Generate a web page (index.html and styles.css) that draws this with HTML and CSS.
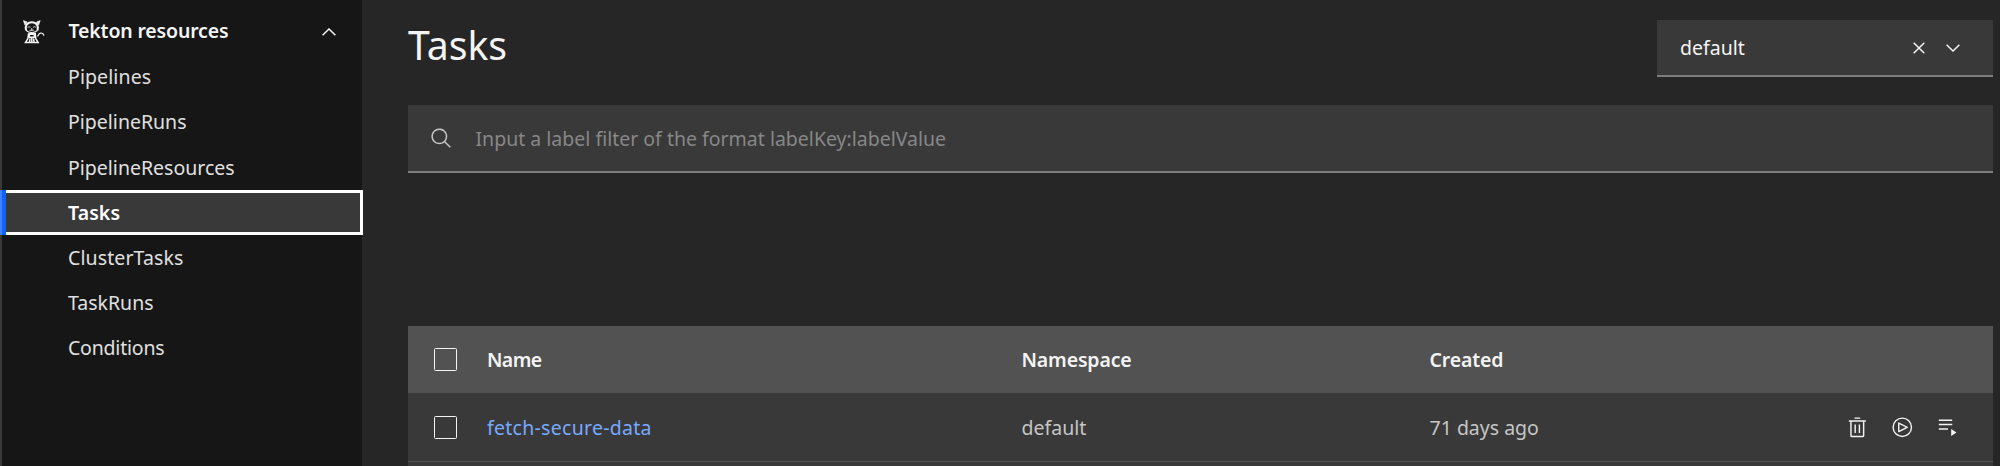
FILE: index.html
```
<!DOCTYPE html>
<html lang="en">
<head>
<meta charset="utf-8">
<title>Tasks</title>
<link rel="stylesheet" href="styles.css">
</head>
<body>
<div class="app">
  <nav class="sidebar">
    <div class="nav-header">
      <svg class="nav-logo" viewBox="0 0 22 24" fill="none" stroke="#f4f4f4">
        <path d="M.4.6 4.2 2 2 5.2zM17.2.6 13.4 2l2.2 3.2z" fill="#f4f4f4" stroke-width=".6"/>
        <path d="M3 10.2C1.600 6 4.300 2.200 8.800 2.200s7.200 3.800 5.800 8" stroke-width="2"/>
        <path d="M2.800 9.500c1.500 2.800 3.700 3 6 3s4.500-.2 6-3" stroke-width="1.200"/>
        <path d="M4.500 7.300q1.700-1.200 3 0M10 7.300q1.400-1.200 3 0M8.800 8v3M6.500 10.200h4.600" stroke-width=".8"/>
        <path d="M5.500 13.500h6.700l.6 5.300M5.500 13.500l-.6 5.300M6.300 14.300h5v3h-5zM5 18.400l-2.500 4h4l.5-3.900M12.600 18.400l2.500 4h-4l-.5-3.900M8.800 17.500v4.800M6.800 22.400h4" stroke-width="1.500"/>
        <path d="M14.200 16.200c1.800-.2 1-3 3.600-3.200 1.800 0 2.800 1 3.100 2.600" stroke-width="1.200"/>
      </svg>
      <span class="nav-title">Tekton resources</span>
      <svg class="nav-chevron" viewBox="0 0 14 8"><path d="M.6 7.300 7 1l6.400 6.300"/></svg>
    </div>
    <ul class="nav-list">
      <li class="nav-item ls-up">Pipelines</li>
      <li class="nav-item">PipelineRuns</li>
      <li class="nav-item">PipelineResources</li>
      <li class="nav-item active ls-up">Tasks</li>
      <li class="nav-item ls-up">ClusterTasks</li>
      <li class="nav-item">TaskRuns</li>
      <li class="nav-item ls-down">Conditions</li>
    </ul>
  </nav>
  <main class="content">
    <header class="page-header">
      <h1 class="page-title">Tasks</h1>
      <div class="dropdown">
        <span class="dropdown-value">default</span>
        <svg class="close-icon" viewBox="0 0 12 12"><path d="m.7.700 10.600 10.600M11.300.700.700 11.300"/></svg>
        <svg class="chevron-icon" viewBox="0 0 14 8"><path d="M.6.700 7 7l6.400-6.300"/></svg>
      </div>
    </header>
    <div class="search">
      <svg class="search-icon" viewBox="0 0 32 32"><path d="M29,27.5859l-7.5521-7.5521a11.0177,11.0177,0,1,0-1.4141,1.4141L27.5859,29ZM4,13a9,9,0,1,1,9,9A9.01,9.01,0,0,1,4,13Z"/></svg>
      <span>Input a label filter of the format labelKey:labelValue</span>
    </div>
    <div class="table">
      <div class="row head">
        <span class="checkbox"></span>
        <span class="ls-head">Name</span>
        <span>Namespace</span>
        <span>Created</span>
      </div>
      <div class="row">
        <span class="checkbox"></span>
        <a class="link">fetch-secure-data</a>
        <span>default</span>
        <span>71 days ago</span>
        <div class="actions">
          <svg viewBox="0 0 32 32"><path d="M12 12h2v12h-2zM18 12h2v12h-2zM4 6v2h2v20a2 2 0 0 0 2 2h16a2 2 0 0 0 2-2V8h2V6zm4 22V8h16v20zM12 2h8v2h-8z"/></svg>
          <svg viewBox="0 0 32 32"><path d="M11,23a1,1,0,0,1-1-1V10a1,1,0,0,1,1.447-.894l12,6a1,1,0,0,1,0,1.788l-12,6A1,1,0,0,1,11,23Zm1-11.382v8.764L20.764,16Z"/><path d="M16,4A12,12,0,1,1,4,16,12,12,0,0,1,16,4m0-2A14,14,0,1,0,30,16,14,14,0,0,0,16,2Z"/></svg>
          <svg viewBox="0 0 32 32"><path d="M4 5h19v2H4zM4 11h19v2H4zM4 17.500h13v2H4zM21.500 18.500v10l7.500-5z"/></svg>
        </div>
      </div>
      <div class="row"></div>
    </div>
  </main>
</div>
</body>
</html>
```
FILE: styles.css
```
* { box-sizing: border-box; }
body {
  margin: 0;
  background: #262626;
  color: #f4f4f4;
  font: 19.5px "Noto Sans", sans-serif;
}
svg { display: block; flex: none; fill: #f4f4f4; }
.app { display: flex; height: 466px; overflow: hidden; }

.sidebar {
  flex: none;
  width: 362px;
  padding-top: 9px;
  background: linear-gradient(to right, #393939 2px, #161616 2px);
}
.nav-header { display: flex; align-items: center; height: 45.2px; padding: 0 26.500px 0 23px; }
.nav-logo { width: 22px; height: 24px; fill: none; }
.nav-title { flex: 1; margin-left: 23.500px; padding-bottom: 2px; font-weight: 600; letter-spacing: -0.16px; }
.nav-chevron { width: 14px; height: 8px; }
.nav-chevron path, .close-icon path, .chevron-icon path { fill: none; stroke: #f4f4f4; stroke-width: 1.500; }
.nav-list { margin: 0; padding: 0; list-style: none; }
.nav-item { height: 45.200px; padding-left: 68px; line-height: 45.200px; color: #e0e0e0; }
.nav-item.active {
  width: 363px;
  background:
    linear-gradient(to right, #4580ff 2px, #0f62fe 2px) 0 0 / 6px 100% no-repeat,
    linear-gradient(#393939, #393939) 6px 3px / 354px calc(100% - 6px) no-repeat,
    #fff;
  color: #fff;
  font-weight: 600;
}
.ls-up { letter-spacing: 0.1px; }
.ls-down { letter-spacing: -0.2px; }
.ls-head { letter-spacing: -0.6px; }

.content { flex: 1; display: flex; flex-direction: column; padding: 20px 7px 0 46px; }
.page-header { flex: none; display: flex; justify-content: space-between; height: 85px; }
.page-title { margin: 0; font-size: 39.200px; font-weight: 400; line-height: 49px; color: #f4f4f4; }
.dropdown {
  display: flex;
  align-items: center;
  width: 336px;
  height: 57px;
  padding: 0 33px 0 23px;
  background: #393939;
  border-bottom: 2px solid #7c7c7c;
}
.dropdown-value { flex: 1; }
.close-icon { width: 12px; height: 12px; margin-right: 21px; }
.chevron-icon { width: 14px; height: 8px; }
.search {
  flex: none;
  display: flex;
  align-items: center;
  gap: 22.500px;
  height: 68px;
  padding-left: 22px;
  background: #393939;
  border-bottom: 2px solid #7c7c7c;
  color: #878787;
}
.search-icon { width: 23px; height: 23px; fill: #c6c6c6; }

.table { flex: none; margin-top: 153px; }
.row {
  display: grid;
  grid-template-columns: 53px 534.500px 408px 1fr auto;
  align-items: center;
  height: 69px;
  padding: 0 34px 0 26px;
  background: #393939;
  border-bottom: 1px solid #525252;
  color: #c6c6c6;
}
.row.head { height: 67px; background: #525252; border: 0; color: #f4f4f4; font-weight: 600; letter-spacing: -0.15px; }
.checkbox { width: 23px; height: 23px; border: 1.500px solid #f4f4f4; border-radius: 1.500px; }
.link { color: #78a9ff; letter-spacing: 0.28px; }
.actions { display: flex; gap: 22.600px; }
.actions svg { width: 22.600px; height: 22.600px; }
```
